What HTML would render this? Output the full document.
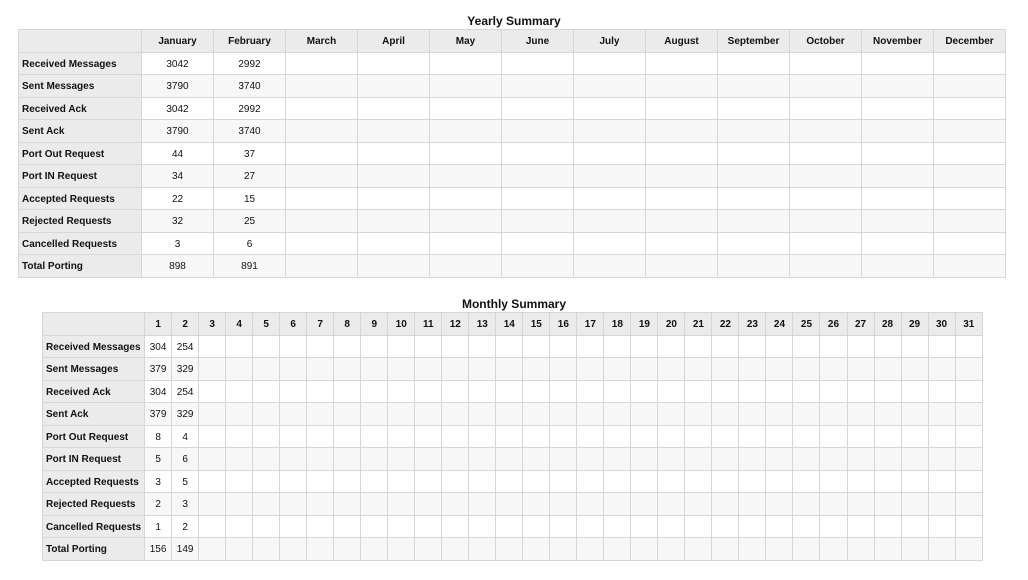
<!DOCTYPE html>
<html><head><meta charset="utf-8"><style>
html,body{margin:0;padding:0;background:#fff;width:1028px;height:580px;overflow:hidden;font-family:"Liberation Sans",Arial,sans-serif;color:#111}
.t{position:absolute;font-weight:bold;font-size:12px;text-align:center;left:0;width:1028px}
table{position:absolute;border-collapse:collapse;table-layout:fixed;font-size:10px}
td{border:1px solid #d6d6d6;text-align:center;padding:2px 0 0 0;overflow:hidden;white-space:nowrap;box-sizing:border-box}
tr:nth-child(odd) td{background:#f7f7f7}
tr:nth-child(even) td{background:#fff}
tr.h td{background:#ebebeb;font-weight:bold}
td.l{background:#ebebeb!important;font-weight:bold;text-align:left;padding-left:3px}
#y{left:18px;top:29px;width:988px}
#y tr{height:22.5px}
#m{left:42px;top:312px;width:941px}
#m tr{height:22.5px}
</style></head><body>
<div class="t" style="top:14px">Yearly Summary</div>
<table id="y">
<colgroup><col style="width:123px"><col span="12" style="width:72px"></colgroup>
<tr class="h"><td></td><td>January</td><td>February</td><td>March</td><td>April</td><td>May</td><td>June</td><td>July</td><td>August</td><td>September</td><td>October</td><td>November</td><td>December</td></tr>
<tr><td class="l">Received Messages</td><td>3042</td><td>2992</td><td></td><td></td><td></td><td></td><td></td><td></td><td></td><td></td><td></td><td></td></tr>
<tr><td class="l">Sent Messages</td><td>3790</td><td>3740</td><td></td><td></td><td></td><td></td><td></td><td></td><td></td><td></td><td></td><td></td></tr>
<tr><td class="l">Received Ack</td><td>3042</td><td>2992</td><td></td><td></td><td></td><td></td><td></td><td></td><td></td><td></td><td></td><td></td></tr>
<tr><td class="l">Sent Ack</td><td>3790</td><td>3740</td><td></td><td></td><td></td><td></td><td></td><td></td><td></td><td></td><td></td><td></td></tr>
<tr><td class="l">Port Out Request</td><td>44</td><td>37</td><td></td><td></td><td></td><td></td><td></td><td></td><td></td><td></td><td></td><td></td></tr>
<tr><td class="l">Port IN Request</td><td>34</td><td>27</td><td></td><td></td><td></td><td></td><td></td><td></td><td></td><td></td><td></td><td></td></tr>
<tr><td class="l">Accepted Requests</td><td>22</td><td>15</td><td></td><td></td><td></td><td></td><td></td><td></td><td></td><td></td><td></td><td></td></tr>
<tr><td class="l">Rejected Requests</td><td>32</td><td>25</td><td></td><td></td><td></td><td></td><td></td><td></td><td></td><td></td><td></td><td></td></tr>
<tr><td class="l">Cancelled Requests</td><td>3</td><td>6</td><td></td><td></td><td></td><td></td><td></td><td></td><td></td><td></td><td></td><td></td></tr>
<tr><td class="l">Total Porting</td><td>898</td><td>891</td><td></td><td></td><td></td><td></td><td></td><td></td><td></td><td></td><td></td><td></td></tr>
</table>
<div class="t" style="top:297px">Monthly Summary</div>
<table id="m">
<colgroup><col style="width:102px"><col span="31" style="width:27px"></colgroup>
<tr class="h"><td></td><td>1</td><td>2</td><td>3</td><td>4</td><td>5</td><td>6</td><td>7</td><td>8</td><td>9</td><td>10</td><td>11</td><td>12</td><td>13</td><td>14</td><td>15</td><td>16</td><td>17</td><td>18</td><td>19</td><td>20</td><td>21</td><td>22</td><td>23</td><td>24</td><td>25</td><td>26</td><td>27</td><td>28</td><td>29</td><td>30</td><td>31</td></tr>
<tr><td class="l">Received Messages</td><td>304</td><td>254</td><td></td><td></td><td></td><td></td><td></td><td></td><td></td><td></td><td></td><td></td><td></td><td></td><td></td><td></td><td></td><td></td><td></td><td></td><td></td><td></td><td></td><td></td><td></td><td></td><td></td><td></td><td></td><td></td><td></td></tr>
<tr><td class="l">Sent Messages</td><td>379</td><td>329</td><td></td><td></td><td></td><td></td><td></td><td></td><td></td><td></td><td></td><td></td><td></td><td></td><td></td><td></td><td></td><td></td><td></td><td></td><td></td><td></td><td></td><td></td><td></td><td></td><td></td><td></td><td></td><td></td><td></td></tr>
<tr><td class="l">Received Ack</td><td>304</td><td>254</td><td></td><td></td><td></td><td></td><td></td><td></td><td></td><td></td><td></td><td></td><td></td><td></td><td></td><td></td><td></td><td></td><td></td><td></td><td></td><td></td><td></td><td></td><td></td><td></td><td></td><td></td><td></td><td></td><td></td></tr>
<tr><td class="l">Sent Ack</td><td>379</td><td>329</td><td></td><td></td><td></td><td></td><td></td><td></td><td></td><td></td><td></td><td></td><td></td><td></td><td></td><td></td><td></td><td></td><td></td><td></td><td></td><td></td><td></td><td></td><td></td><td></td><td></td><td></td><td></td><td></td><td></td></tr>
<tr><td class="l">Port Out Request</td><td>8</td><td>4</td><td></td><td></td><td></td><td></td><td></td><td></td><td></td><td></td><td></td><td></td><td></td><td></td><td></td><td></td><td></td><td></td><td></td><td></td><td></td><td></td><td></td><td></td><td></td><td></td><td></td><td></td><td></td><td></td><td></td></tr>
<tr><td class="l">Port IN Request</td><td>5</td><td>6</td><td></td><td></td><td></td><td></td><td></td><td></td><td></td><td></td><td></td><td></td><td></td><td></td><td></td><td></td><td></td><td></td><td></td><td></td><td></td><td></td><td></td><td></td><td></td><td></td><td></td><td></td><td></td><td></td><td></td></tr>
<tr><td class="l">Accepted Requests</td><td>3</td><td>5</td><td></td><td></td><td></td><td></td><td></td><td></td><td></td><td></td><td></td><td></td><td></td><td></td><td></td><td></td><td></td><td></td><td></td><td></td><td></td><td></td><td></td><td></td><td></td><td></td><td></td><td></td><td></td><td></td><td></td></tr>
<tr><td class="l">Rejected Requests</td><td>2</td><td>3</td><td></td><td></td><td></td><td></td><td></td><td></td><td></td><td></td><td></td><td></td><td></td><td></td><td></td><td></td><td></td><td></td><td></td><td></td><td></td><td></td><td></td><td></td><td></td><td></td><td></td><td></td><td></td><td></td><td></td></tr>
<tr><td class="l">Cancelled Requests</td><td>1</td><td>2</td><td></td><td></td><td></td><td></td><td></td><td></td><td></td><td></td><td></td><td></td><td></td><td></td><td></td><td></td><td></td><td></td><td></td><td></td><td></td><td></td><td></td><td></td><td></td><td></td><td></td><td></td><td></td><td></td><td></td></tr>
<tr><td class="l">Total Porting</td><td>156</td><td>149</td><td></td><td></td><td></td><td></td><td></td><td></td><td></td><td></td><td></td><td></td><td></td><td></td><td></td><td></td><td></td><td></td><td></td><td></td><td></td><td></td><td></td><td></td><td></td><td></td><td></td><td></td><td></td><td></td><td></td></tr>
</table>
</body></html>
